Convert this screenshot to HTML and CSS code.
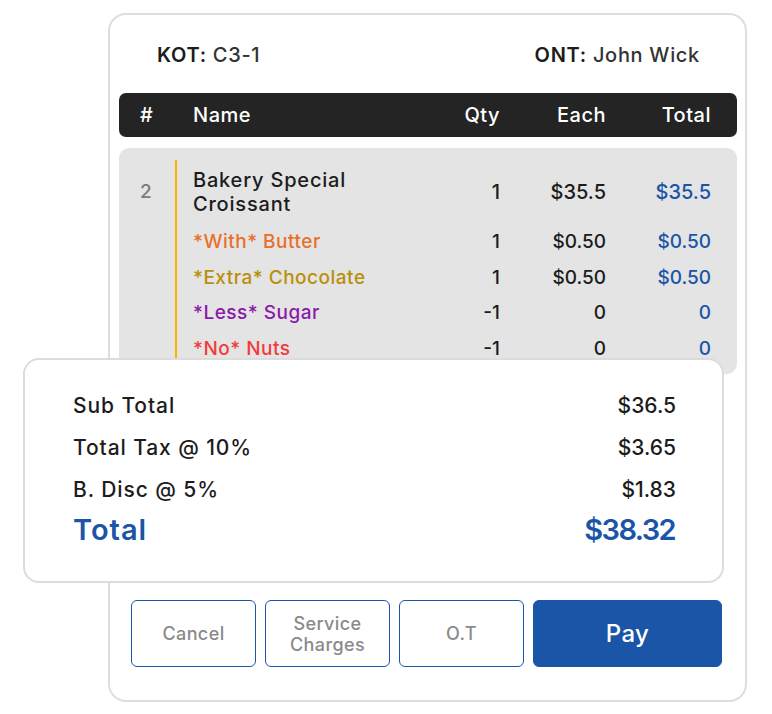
FILE: index.html
```html
<!DOCTYPE html>
<html lang="en">
<head>
    <meta charset="UTF-8">
    <meta name="viewport" content="width=device-width, initial-scale=1.0">
    <title>KOT ticket</title>
    <link rel="stylesheet" href="styles.css">
</head>
<body>
    <div class="ticket">
        <div class="ticket-head">
            <div><b>KOT:</b> C3-1</div>
            <div><b>ONT:</b> John Wick</div>
        </div>

        <div class="cols thead">
            <div>#</div>
            <div>Name</div>
            <div class="num">Qty</div>
            <div class="num">Each</div>
            <div class="num">Total</div>
        </div>

        <div class="tbody">
            <div class="idx">2</div>
            <div class="lines">
                <div class="row item">
                    <div class="name">Bakery Special<br>Croissant</div>
                    <div class="num">1</div>
                    <div class="num">$35.5</div>
                    <div class="num blue">$35.5</div>
                </div>
                <div class="row mod">
                    <div class="name orange">*With* Butter</div>
                    <div class="num">1</div>
                    <div class="num">$0.50</div>
                    <div class="num blue">$0.50</div>
                </div>
                <div class="row mod">
                    <div class="name gold">*Extra* Chocolate</div>
                    <div class="num">1</div>
                    <div class="num">$0.50</div>
                    <div class="num blue">$0.50</div>
                </div>
                <div class="row mod">
                    <div class="name purple">*Less* Sugar</div>
                    <div class="num">-1</div>
                    <div class="num">0</div>
                    <div class="num blue">0</div>
                </div>
                <div class="row mod">
                    <div class="name red">*No* Nuts</div>
                    <div class="num">-1</div>
                    <div class="num">0</div>
                    <div class="num blue">0</div>
                </div>
            </div>
        </div>

        <div class="summary">
            <div class="sum-row"><span class="label">Sub Total</span><span>$36.5</span></div>
            <div class="sum-row"><span class="label">Total Tax @ 10%</span><span>$3.65</span></div>
            <div class="sum-row"><span class="label">B. Disc @ 5%</span><span>$1.83</span></div>
            <div class="sum-row grand"><span class="label">Total</span><span class="amount">$38.32</span></div>
        </div>

        <div class="actions">
            <button class="btn">Cancel</button>
            <button class="btn">Service<br>Charges</button>
            <button class="btn">O.T</button>
            <button class="btn pay">Pay</button>
        </div>
    </div>
</body>
</html>
```

FILE: styles.css
```css
body {
    margin: 0;
    font-family: Inter, "Open Sans", sans-serif;
    color: #1c1c1c;
}
.ticket {
    margin: 13px 0 0 108px;
    width: 639px;
    box-sizing: border-box;
    border: 2px solid #dedede;
    border-radius: 18px;
    padding: 0 8px 33px 9px;
}
.ticket-head {
    display: flex;
    justify-content: space-between;
    margin-top: 20px;
    height: 40px;
    line-height: 40px;
    padding: 0 37px 0 38px;
    font-size: 20px;
    font-weight: 500;
    letter-spacing: 0.7px;
    color: #333;
}
.ticket-head b {
    font-weight: 600;
    color: #1c1c1c;
}
.cols, .row {
    display: grid;
    grid-template-columns: 53px 1fr 60px 106px 105px;
}
.row {
    grid-template-columns: 1fr 60px 106px 105px;
    align-items: center;
}
.num {
    text-align: right;
}
.thead {
    margin-top: 18px;
    height: 44px;
    line-height: 44px;
    background: #242424;
    border-radius: 7px;
    padding: 0 26px 0 21px;
    color: #fff;
    font-size: 20px;
    font-weight: 500;
    letter-spacing: 0.5px;
}
.tbody {
    display: flex;
    margin-top: 11px;
    background: #e4e4e4;
    border-radius: 10px;
    padding: 12px 26px 8px 21px;
    font-size: 19px;
    font-weight: 500;
}
.name {
    letter-spacing: 0.5px;
}
.idx {
    width: 35px;
    line-height: 64px;
    color: #7a7a7a;
}
.lines {
    flex: 1;
    border-left: 2px solid #f5b400;
    padding-left: 16px;
}
.item {
    padding: 8px 0;
    line-height: 24px;
    font-size: 20px;
}
.item .name {
    letter-spacing: 0.8px;
}
.mod {
    height: 35.5px;
}
.blue { color: #1a55a8; }
.orange { color: #e8702a; }
.gold { color: #b8900a; }
.purple { color: #8a1aa8; }
.red { color: #f03c3c; }
.summary {
    position: relative;
    margin: -16px 0 0 -96px;
    width: 701px;
    box-sizing: border-box;
    background: #fff;
    border: 2px solid #dcdcdc;
    border-radius: 16px;
    padding: 25px 46px 32px 48px;
    font-size: 21px;
    font-weight: 500;
}
.sum-row {
    display: flex;
    justify-content: space-between;
    line-height: 42px;
}
.sum-row .label {
    letter-spacing: 0.9px;
}
.grand {
    line-height: 38px;
    font-size: 29px;
    font-weight: 600;
    color: #1a55a8;
}
.grand .label {
    letter-spacing: 1px;
}
.grand .amount {
    letter-spacing: -1.6px;
    margin-right: 1px;
}
.actions {
    display: flex;
    gap: 9px;
    margin-top: 17px;
    padding: 0 15px 0 12px;
}
.btn {
    flex: 0 0 125px;
    height: 67px;
    background: #fff;
    border: 1.5px solid #1a55a8;
    border-radius: 6px;
    font-family: inherit;
    font-size: 18px;
    font-weight: 500;
    letter-spacing: 0.4px;
    color: #8a8a8a;
    line-height: 21px;
}
.pay {
    flex: 1;
    background: #1a55a8;
    color: #fff;
    font-size: 24px;
}
```
